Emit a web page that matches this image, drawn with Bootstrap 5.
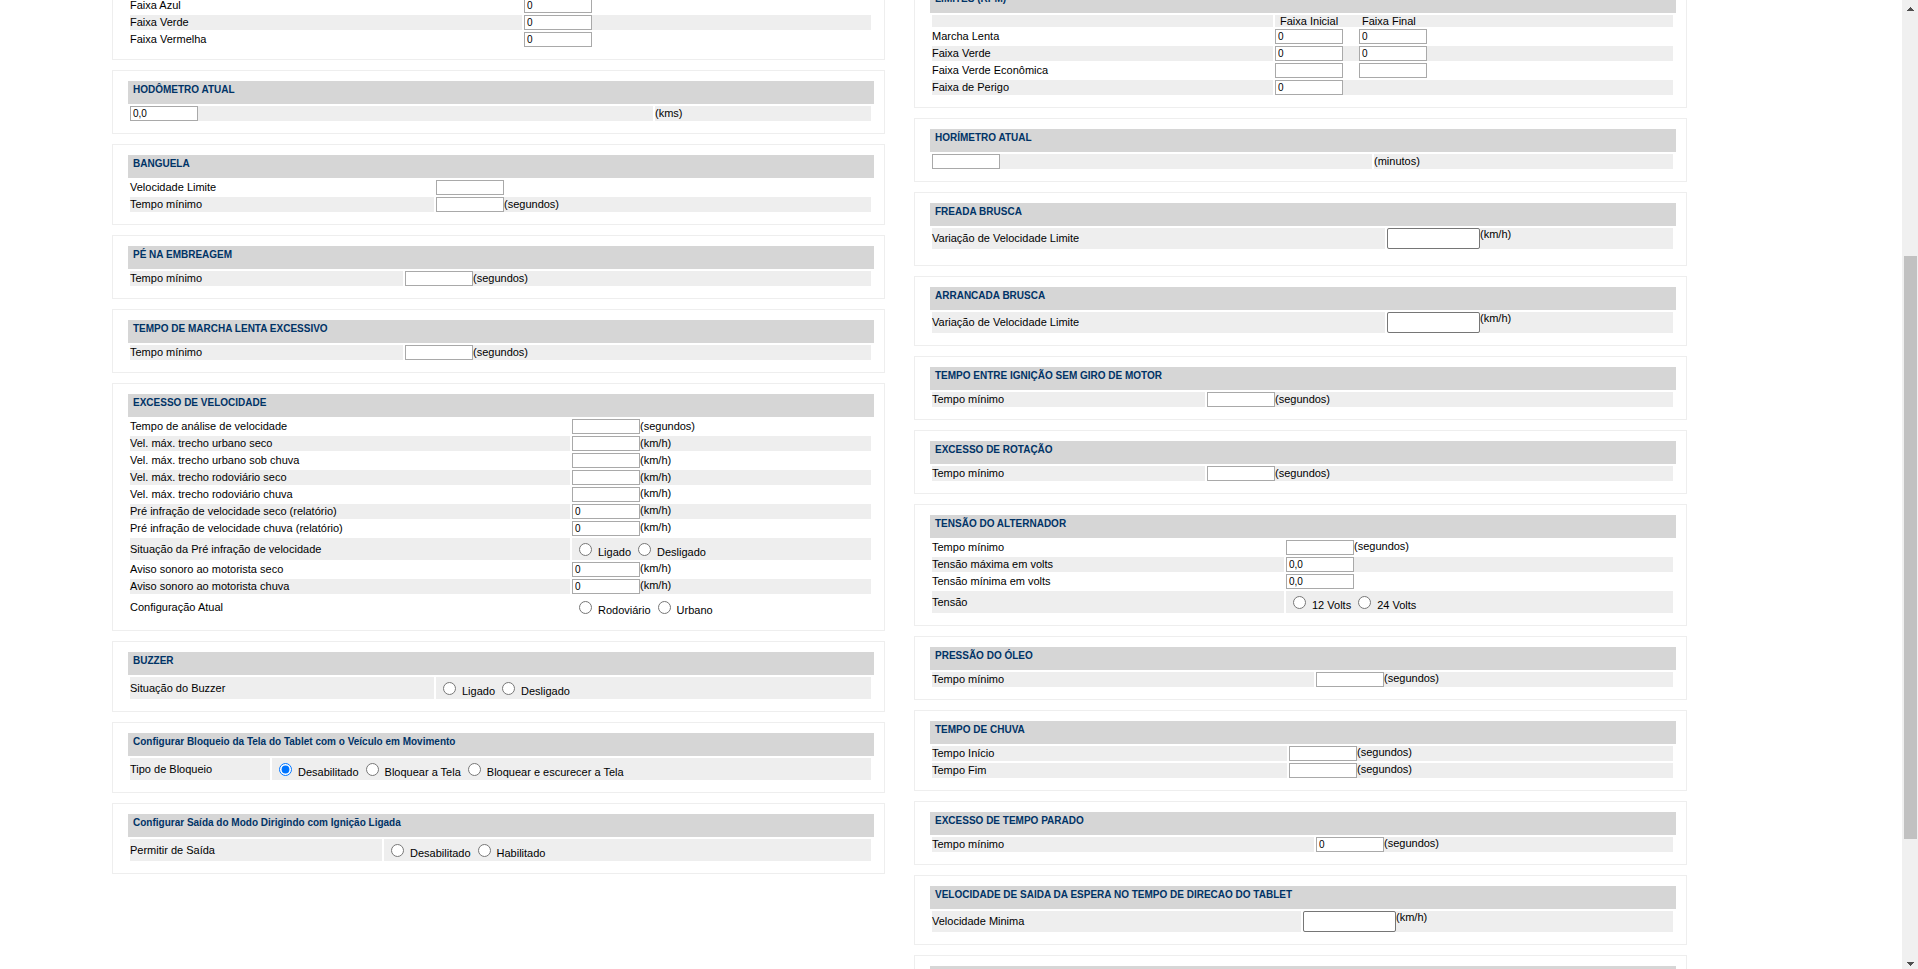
<!DOCTYPE html>
<html lang="pt-BR">
<head>
<meta charset="utf-8">
<meta name="viewport" content="width=device-width, initial-scale=1">
<title>Configurações do veículo</title>
<link href="https://cdn.jsdelivr.net/npm/bootstrap@5.3.0/dist/css/bootstrap.min.css" rel="stylesheet">
<style>
  body { font: 11px/15px "Liberation Sans", Arial, sans-serif; color: #000; background: #fff; }
  .page-area { padding: 0 215px 0 112px; }
  .page-cols { gap: 29px; margin-top: -21px; }
  .page-col { display: flex; flex-direction: column; gap: 10px; flex: 1 1 0; min-width: 0; }

  .panel { border: 1px solid #eee; padding: 10px 10px 12px 15px; }
  .panel-cont { border-top: 0; padding-top: 0; }
  .panel-loose { padding-bottom: 16px; }
  .panel h2 { background: #d6d6d6; color: #036; font-size: 10px; font-weight: 700; line-height: 11px; height: 23px; padding: 3px 5px 0; margin: 0; }

  .line { display: grid; grid-template-columns: var(--split); column-gap: 2px; margin: 2px 3px 0 2px; min-height: 15px; }
  .line > * { display: flex; align-items: center; min-width: 0; }
  .line.alt > * { background: #eee; }
  .line-head { min-height: 12px; line-height: 12px; }
  .line-radio { min-height: 22px; }
  .a140 { --split: 140fr 599fr; }
  .a252 { --split: 252fr 487fr; }
  .a273 { --split: 273fr 466fr; }
  .a304 { --split: 304fr 435fr; }
  .a341 { --split: 341fr 398fr; }
  .a352 { --split: 352fr 387fr; }
  .a355 { --split: 355fr 384fr; }
  .a369 { --split: 369fr 370fr; }
  .a382 { --split: 382fr 357fr; }
  .a392 { --split: 392fr 347fr; }
  .a440 { --split: 440fr 299fr; }
  .a453 { --split: 453fr 286fr; }
  .a523 { --split: 523fr 216fr; }

  input[type=text] { width: 68px; height: 15px; padding: 0 2px; border: 1px solid #a9a9a9; border-radius: 0; font-size: 10px; line-height: 13px; color: #000; background: #fff; }
  input[type=text].big { width: 93px; height: 21px; border-color: #767676; border-radius: 2px; }
  .pair { gap: 16px; }
  .pair-head span { width: 82px; padding-left: 5px; }
  .unit-top { align-self: flex-start; line-height: 13px; }
  .choices { padding-left: 7px; gap: 7px; }
  .choices label { display: flex; align-items: center; gap: 6px; }
  .choices input { width: 13px; height: 13px; margin: 0; }
  .choices span { padding-top: 6px; }

  .sbar { width: 16px; background: #f0f0f0; padding: 0 1px 0 2px; }
  .sbar svg { display: block; width: 13px; height: 17px; }
  .sbar-thumb { flex: 583 0 0; background: #c1c1c1; }
  .sbar-before { flex: 239 0 0; }
  .sbar-after { flex: 113 0 0; }
</style>
</head>
<body>
<div class="d-flex vh-100 overflow-hidden">
  <main class="page-area flex-grow-1">
    <form class="page-cols d-flex align-items-start">

      <div class="page-col">
        <section class="panel panel-cont a392">
          <div class="line"></div>
          <div class="line"><label for="azul">Faixa Azul</label><div><input type="text" id="azul" value="0"></div></div>
          <div class="line alt"><label for="verde">Faixa Verde</label><div><input type="text" id="verde" value="0"></div></div>
          <div class="line"><label for="vermelha">Faixa Vermelha</label><div><input type="text" id="vermelha" value="0"></div></div>
        </section>

        <section class="panel a523">
          <h2>HODÔMETRO ATUAL</h2>
          <div class="line alt"><div><input type="text" id="hodo" value="0,0"></div><label for="hodo">(kms)</label></div>
        </section>

        <section class="panel a304">
          <h2>BANGUELA</h2>
          <div class="line"><label for="bvel">Velocidade Limite</label><div><input type="text" id="bvel"></div></div>
          <div class="line alt"><label for="btmp">Tempo mínimo</label><div><input type="text" id="btmp"><span>(segundos)</span></div></div>
        </section>

        <section class="panel a273">
          <h2>PÉ NA EMBREAGEM</h2>
          <div class="line alt"><label for="emb">Tempo mínimo</label><div><input type="text" id="emb"><span>(segundos)</span></div></div>
        </section>

        <section class="panel a273">
          <h2>TEMPO DE MARCHA LENTA EXCESSIVO</h2>
          <div class="line alt"><label for="mle">Tempo mínimo</label><div><input type="text" id="mle"><span>(segundos)</span></div></div>
        </section>

        <section class="panel a440">
          <h2>EXCESSO DE VELOCIDADE</h2>
          <div class="line"><label for="v1">Tempo de análise de velocidade</label><div><input type="text" id="v1"><span>(segundos)</span></div></div>
          <div class="line alt"><label for="v2">Vel. máx. trecho urbano seco</label><div><input type="text" id="v2"><span>(km/h)</span></div></div>
          <div class="line"><label for="v3">Vel. máx. trecho urbano sob chuva</label><div><input type="text" id="v3"><span>(km/h)</span></div></div>
          <div class="line alt"><label for="v4">Vel. máx. trecho rodoviário seco</label><div><input type="text" id="v4"><span>(km/h)</span></div></div>
          <div class="line"><label for="v5">Vel. máx. trecho rodoviário chuva</label><div><input type="text" id="v5"><span class="unit-top">(km/h)</span></div></div>
          <div class="line alt"><label for="v6">Pré infração de velocidade seco (relatório)</label><div><input type="text" id="v6" value="0"><span class="unit-top">(km/h)</span></div></div>
          <div class="line"><label for="v7">Pré infração de velocidade chuva (relatório)</label><div><input type="text" id="v7" value="0"><span class="unit-top">(km/h)</span></div></div>
          <div class="line line-radio alt"><div id="pre">Situação da Pré infração de velocidade</div>
            <div class="choices" role="radiogroup" aria-labelledby="pre">
              <label><input type="radio" name="pre"><span>Ligado</span></label>
              <label><input type="radio" name="pre"><span>Desligado</span></label>
            </div></div>
          <div class="line"><label for="v8">Aviso sonoro ao motorista seco</label><div><input type="text" id="v8" value="0"><span class="unit-top">(km/h)</span></div></div>
          <div class="line alt"><label for="v9">Aviso sonoro ao motorista chuva</label><div><input type="text" id="v9" value="0"><span class="unit-top">(km/h)</span></div></div>
          <div class="line line-radio"><div id="conf">Configuração Atual</div>
            <div class="choices" role="radiogroup" aria-labelledby="conf">
              <label><input type="radio" name="conf"><span>Rodoviário</span></label>
              <label><input type="radio" name="conf"><span>Urbano</span></label>
            </div></div>
        </section>

        <section class="panel a304">
          <h2>BUZZER</h2>
          <div class="line line-radio alt"><div id="buz">Situação do Buzzer</div>
            <div class="choices" role="radiogroup" aria-labelledby="buz">
              <label><input type="radio" name="buz"><span>Ligado</span></label>
              <label><input type="radio" name="buz"><span>Desligado</span></label>
            </div></div>
        </section>

        <section class="panel a140">
          <h2>Configurar Bloqueio da Tela do Tablet com o Veículo em Movimento</h2>
          <div class="line line-radio alt"><div id="blq">Tipo de Bloqueio</div>
            <div class="choices" role="radiogroup" aria-labelledby="blq">
              <label><input type="radio" name="blq" checked><span>Desabilitado</span></label>
              <label><input type="radio" name="blq"><span>Bloquear a Tela</span></label>
              <label><input type="radio" name="blq"><span>Bloquear e escurecer a Tela</span></label>
            </div></div>
        </section>

        <section class="panel a252">
          <h2>Configurar Saída do Modo Dirigindo com Ignição Ligada</h2>
          <div class="line line-radio alt"><div id="sai">Permitir de Saída</div>
            <div class="choices" role="radiogroup" aria-labelledby="sai">
              <label><input type="radio" name="sai"><span>Desabilitado</span></label>
              <label><input type="radio" name="sai"><span>Habilitado</span></label>
            </div></div>
        </section>
      </div>

      <div class="page-col">
        <section class="panel a341">
          <h2>LIMITES (RPM)</h2>
          <div class="line line-head alt"><div></div><div class="pair-head"><span>Faixa Inicial</span><span>Faixa Final</span></div></div>
          <div class="line"><label for="r1">Marcha Lenta</label><div class="pair"><input type="text" id="r1" value="0"><input type="text" aria-label="Marcha Lenta, Faixa Final" value="0"></div></div>
          <div class="line alt"><label for="r2">Faixa Verde</label><div class="pair"><input type="text" id="r2" value="0"><input type="text" aria-label="Faixa Verde, Faixa Final" value="0"></div></div>
          <div class="line"><label for="r3">Faixa Verde Econômica</label><div class="pair"><input type="text" id="r3"><input type="text" aria-label="Faixa Verde Econômica, Faixa Final"></div></div>
          <div class="line alt"><label for="r4">Faixa de Perigo</label><div class="pair"><input type="text" id="r4" value="0"></div></div>
        </section>

        <section class="panel a440">
          <h2>HORÍMETRO ATUAL</h2>
          <div class="line alt"><div><input type="text" id="hori"></div><label for="hori">(minutos)</label></div>
        </section>

        <section class="panel panel-loose a453">
          <h2>FREADA BRUSCA</h2>
          <div class="line alt"><label for="fre">Variação de Velocidade Limite</label><div><input type="text" class="big" id="fre"><span class="unit-top">(km/h)</span></div></div>
        </section>

        <section class="panel a453">
          <h2>ARRANCADA BRUSCA</h2>
          <div class="line alt"><label for="arr">Variação de Velocidade Limite</label><div><input type="text" class="big" id="arr"><span class="unit-top">(km/h)</span></div></div>
        </section>

        <section class="panel a273">
          <h2>TEMPO ENTRE IGNIÇÃO SEM GIRO DE MOTOR</h2>
          <div class="line alt"><label for="ign">Tempo mínimo</label><div><input type="text" id="ign"><span>(segundos)</span></div></div>
        </section>

        <section class="panel a273">
          <h2>EXCESSO DE ROTAÇÃO</h2>
          <div class="line alt"><label for="rot">Tempo mínimo</label><div><input type="text" id="rot"><span>(segundos)</span></div></div>
        </section>

        <section class="panel a352">
          <h2>TENSÃO DO ALTERNADOR</h2>
          <div class="line"><label for="t1">Tempo mínimo</label><div><input type="text" id="t1"><span class="unit-top">(segundos)</span></div></div>
          <div class="line alt"><label for="t2">Tensão máxima em volts</label><div><input type="text" id="t2" value="0,0"></div></div>
          <div class="line"><label for="t3">Tensão mínima em volts</label><div><input type="text" id="t3" value="0,0"></div></div>
          <div class="line line-radio alt"><div id="ten">Tensão</div>
            <div class="choices" role="radiogroup" aria-labelledby="ten">
              <label><input type="radio" name="ten"><span>12 Volts</span></label>
              <label><input type="radio" name="ten"><span>24 Volts</span></label>
            </div></div>
        </section>

        <section class="panel a382">
          <h2>PRESSÃO DO ÓLEO</h2>
          <div class="line alt"><label for="oleo">Tempo mínimo</label><div><input type="text" id="oleo"><span class="unit-top">(segundos)</span></div></div>
        </section>

        <section class="panel a355">
          <h2>TEMPO DE CHUVA</h2>
          <div class="line alt"><label for="c1">Tempo Início</label><div><input type="text" id="c1"><span class="unit-top">(segundos)</span></div></div>
          <div class="line alt"><label for="c2">Tempo Fim</label><div><input type="text" id="c2"><span class="unit-top">(segundos)</span></div></div>
        </section>

        <section class="panel a382">
          <h2>EXCESSO DE TEMPO PARADO</h2>
          <div class="line alt"><label for="par">Tempo mínimo</label><div><input type="text" id="par" value="0"><span class="unit-top">(segundos)</span></div></div>
        </section>

        <section class="panel a369">
          <h2>VELOCIDADE DE SAIDA DA ESPERA NO TEMPO DE DIRECAO DO TABLET</h2>
          <div class="line alt"><label for="vmin">Velocidade Minima</label><div><input type="text" class="big" id="vmin"><span class="unit-top">(km/h)</span></div></div>
        </section>

        <section class="panel"><h2></h2></section>
      </div>
    </form>
  </main>

  <aside class="sbar d-flex flex-column flex-shrink-0" aria-hidden="true">
    <svg viewBox="0 0 13 17" shape-rendering="crispEdges"><path d="M6 7h1v1h1v1h1v1h1v1H3v-1h1V9h1V8h1z" fill="#505050"/></svg>
    <div class="sbar-before"></div>
    <div class="sbar-thumb"></div>
    <div class="sbar-after"></div>
    <svg viewBox="0 0 13 17" shape-rendering="crispEdges"><path d="M3 10h7v1H9v1H8v1H7v1H6v-1H5v-1H4v-1H3z" fill="#505050"/></svg>
  </aside>
</div>
<script src="https://cdn.jsdelivr.net/npm/bootstrap@5.3.0/dist/js/bootstrap.bundle.min.js"></script>
</body>
</html>
